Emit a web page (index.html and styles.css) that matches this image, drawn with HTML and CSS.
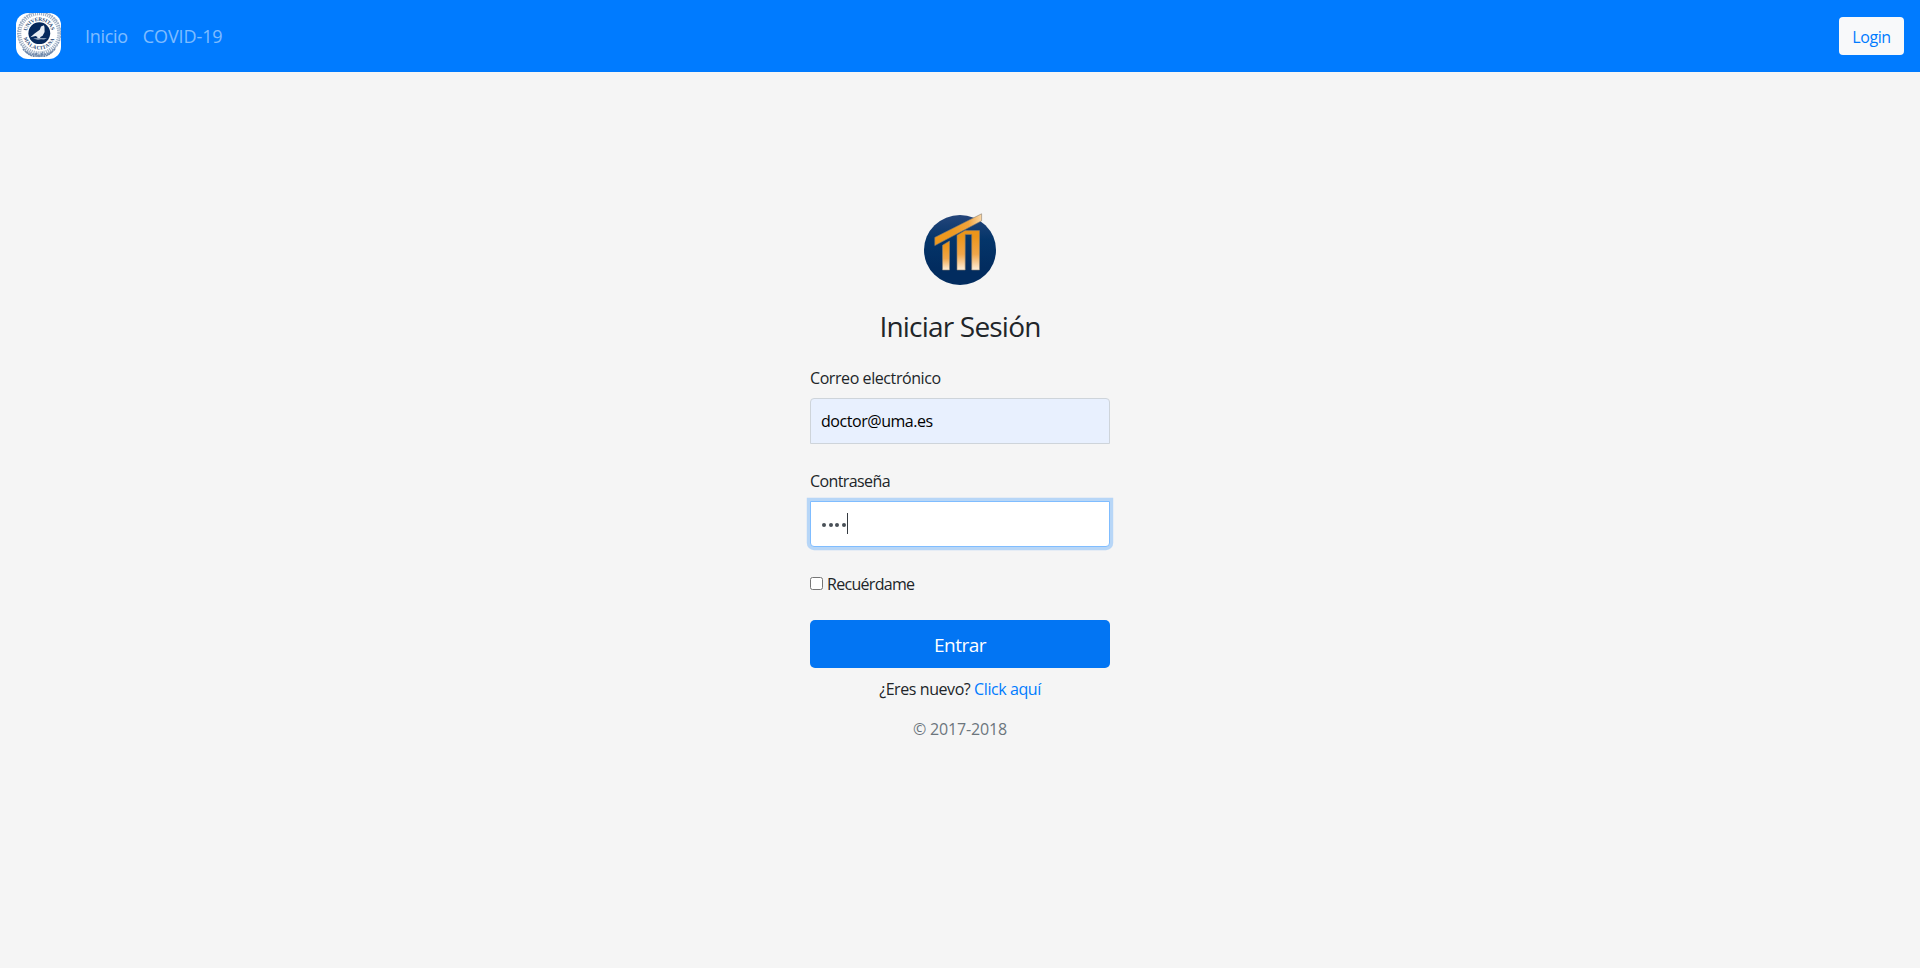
FILE: index.html
```html
<!DOCTYPE html>
<html lang="es">
<head>
<meta charset="utf-8">
<title>Iniciar Sesión</title>
<link rel="stylesheet" href="styles.css">
</head>
<body>
<header class="navbar">
  <a class="brand" href="#">
    <svg class="seal" viewBox="0 0 45 46">
      <defs>
        <path id="arc-top" d="M11 18A12.5 12.5 0 0 1 35.6 18"/>
        <path id="arc-bottom" d="M7.8 25A16.2 16.2 0 0 0 38.8 25"/>
      </defs>
      <rect width="45" height="46" rx="12" fill="#fff"/>
      <g fill="none" stroke="#6f87a8">
        <circle cx="23.3" cy="20.3" r="19.8" stroke-width="3.6" stroke-dasharray="1.2 .9" opacity=".65"/>
        <circle cx="23.3" cy="20.3" r="21.6" stroke-width="1.4" stroke-dasharray="2 1" opacity=".6"/>
        <path d="M7 36q6 7 14 5M39 36q-6 7-14 5M10 39q5 5 11 4M36 39q-5 5-11 4M20 40l3 4 4-5M21 43h5" stroke-width="1.6" stroke-dasharray="2 .6"/>
      </g>
      <circle cx="23.3" cy="20.3" r="17.2" fill="#fff"/>
      <circle cx="23.3" cy="20.2" r="10.9" fill="#06295c"/>
      <path d="M28 12.3l-3 1.2-1.2 3.2-5.2 3.8-4.2 3.7 5.1-1.1 2 .9-.4 1h3l.3-.9 2.2-1.4 2-3.8-.1-4.3z" fill="#e8edf3"/>
      <path d="M17 25.6l6-.6 8 .2-3 1.4-3-.4-3 .6z" fill="#9dafc5"/>
      <g class="seal-text">
        <text><textPath href="#arc-top" textLength="34">UNIVERSITAS</textPath></text>
        <text><textPath href="#arc-bottom" textLength="40">MALACITANA</textPath></text>
      </g>
    </svg>
  </a>
  <nav class="nav">
    <a class="nav-link" href="#">Inicio</a>
    <a class="nav-link covid" href="#">COVID-19</a>
  </nav>
  <a class="login" href="#">Login</a>
</header>
<main class="page">
  <form class="signin">
    <svg class="logo" viewBox="0 0 72 72">
      <defs>
        <linearGradient id="disc" x1="0" x2="0" y1="0" y2="1">
          <stop offset="0" stop-color="#24457a"/>
          <stop offset=".35" stop-color="#04356a"/>
          <stop offset=".75" stop-color="#022c5f"/>
        </linearGradient>
        <linearGradient id="beam" x1="0" x2="1" y1="0" y2="0">
          <stop offset=".3" stop-color="#ed981d"/>
          <stop offset=".72" stop-color="#f1a33c"/>
          <stop offset="1" stop-color="#fbd8a8"/>
        </linearGradient>
        <linearGradient id="pillar" x1="0" x2="0" y1="0" y2="1">
          <stop offset=".15" stop-color="#ec951a"/>
          <stop offset=".6" stop-color="#f0a64a"/>
          <stop offset="1" stop-color="#fff0dc"/>
        </linearGradient>
      </defs>
      <ellipse cx="36" cy="37" rx="36" ry="35" fill="url(#disc)"/>
      <g stroke="#8a8070" stroke-width=".6">
        <path d="M10.8 24.4L57.6.8v7L10.8 32.6z" fill="url(#beam)"/>
        <path d="M18.5 32.2l7-4.2v29h-7z" fill="url(#pillar)"/>
        <path d="M33 22.2l8-4.6h14.5V57h-7.8V21.4h-6.5V57H33z" fill="url(#pillar)"/>
      </g>
    </svg>
    <h1 class="title"><span>Iniciar Sesión</span></h1>
    <label class="label email-label" for="email">Correo electrónico</label>
    <input class="field email" id="email" type="text" value="doctor@uma.es">
    <label class="label password-label" for="password">Contraseña</label>
    <div class="field password" id="password"><i class="dot"></i><i class="dot"></i><i class="dot"></i><i class="dot"></i><i class="caret"></i></div>
    <label class="remember"><i class="checkbox"></i><span>Recuérdame</span></label>
    <button class="submit" type="button">Entrar</button>
    <p class="register"><span>¿Eres nuevo?</span> <a href="#">Click aquí</a></p>
    <p class="copyright">© 2017-2018</p>
  </form>
</main>
</body>
</html>
```
FILE: styles.css
```css
* { box-sizing: border-box; }
body {
  margin: 0;
  min-height: 968px;
  background: #f5f5f5;
  color: #212529;
  font: 16px/24px "Open Sans", "Noto Sans", sans-serif;
  letter-spacing: -.42px;
}
a { color: #007bff; text-decoration: none; }
.navbar {
  display: flex;
  align-items: center;
  height: 72px;
  padding: 0 16px;
  background: #007bff;
}
.brand { display: flex; width: 45px; height: 46px; }
.seal { display: block; width: 45px; height: 46px; }
.seal-text {
  fill: #294a77;
  font: bold 5.2px "Liberation Serif", serif;
  letter-spacing: 0;
}
.nav { display: flex; gap: 16px; margin-left: 24px; }
.nav-link { color: rgba(255, 255, 255, .5); font-size: 18px; letter-spacing: -.3px; }
.covid { margin-left: -1px; letter-spacing: -.1px; }
.login {
  display: flex;
  align-items: center;
  justify-content: center;
  width: 65px;
  height: 38px;
  padding-top: 1px;
  margin-left: auto;
  border-radius: 4px;
  background: #f8f9fa;
}
.page { display: flex; justify-content: center; padding-top: 141px; }
.signin { display: flex; flex-direction: column; width: 300px; }
.logo { width: 72px; height: 72px; align-self: center; }
.title {
  margin: 24px 0 0;
  font-size: 28px;
  font-weight: 400;
  line-height: 34px;
  letter-spacing: -.8px;
  text-align: center;
}
.label { height: 24px; }
.email-label { margin-top: 23px; }
.password-label { margin-top: 25px; letter-spacing: -.6px; }
.field {
  width: 300px;
  height: 46px;
  padding: 0 10px;
  border: 1px solid #ced4da;
}
.email {
  margin-top: 8px;
  border-radius: 4px 4px 0 0;
  outline: 0;
  background: #e8f0fe;
  color: #000;
  font: inherit;
  letter-spacing: -.45px;
}
.password {
  display: flex;
  align-items: center;
  gap: 2.5px;
  margin-top: 8px;
  padding-left: 11px;
  border-color: #80bdff;
  border-radius: 0 0 4px 4px;
  background: #fff;
  box-shadow: 0 0 0 3.2px rgba(0, 123, 255, .25);
}
.dot { width: 4px; height: 4px; margin-top: 2px; border-radius: 50%; background: #495057; }
.caret { width: 1px; height: 21px; margin-left: -1px; margin-top: -2px; background: #343a40; }
.remember { display: flex; align-items: center; gap: 4px; height: 24px; margin-top: 25px; letter-spacing: -.7px; }
.checkbox {
  width: 13px;
  height: 13px;
  margin-top: -1px;
  border: 1px solid #767676;
  border-radius: 2.5px;
  background: #fff;
}
.submit {
  height: 48px;
  margin: 24px 0 0;
  padding: 1px 0 0;
  border: 0;
  border-radius: 5px;
  background: #0275f3;
  color: #fff;
  font: 500 19px/28px "Open Sans", "Noto Sans", sans-serif;
  letter-spacing: -.5px;
}
.register, .copyright { margin: 0; text-align: center; }
.register { margin-top: 9px; }
.copyright { margin-top: 16px; color: #6c757d; letter-spacing: -.15px; }
```
